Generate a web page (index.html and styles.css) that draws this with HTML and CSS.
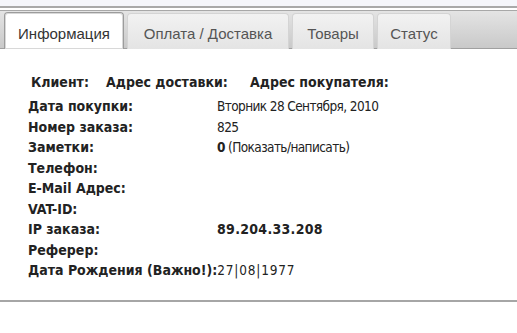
FILE: index.html
```html
<!DOCTYPE html>
<html lang="ru">
<head>
    <meta charset="UTF-8">
    <title>Заказ</title>
    <link rel="stylesheet" href="styles.css">
</head>
<body>
    <div class="topstrip"></div>
    <div class="tabbar">
        <div class="tab active">Информация</div>
        <div class="tab tab-pay">Оплата / Доставка</div>
        <div class="tab tab-goods">Товары</div>
        <div class="tab tab-status">Статус</div>
    </div>

    <div class="panel">
        <div class="heads">
            <span class="head-client">Клиент:</span>
            <span class="head-ship">Адрес доставки:</span>
            <span>Адрес покупателя:</span>
        </div>

        <div class="info">
            <div class="label">Дата покупки:</div>
            <div class="value">Вторник 28 Сентября, 2010</div>
            <div class="label">Номер заказа:</div>
            <div class="value">825</div>
            <div class="label">Заметки:</div>
            <div class="value"><b>0</b> (Показать/написать)</div>
            <div class="label">Телефон:</div>
            <div class="value"></div>
            <div class="label">E-Mail Адрес:</div>
            <div class="value"></div>
            <div class="label">VAT-ID:</div>
            <div class="value"></div>
            <div class="label">IP заказа:</div>
            <div class="value ip">89.204.33.208</div>
            <div class="label">Реферер:</div>
            <div class="value"></div>
            <div class="label birth">Дата Рождения (Важно!):<span class="value bday">27|08|1977</span></div>
        </div>
    </div>
    <div class="bottomline"></div>
</body>
</html>
```

FILE: styles.css
```css
* {
    box-sizing: border-box;
    margin: 0;
    padding: 0;
}

body {
    font-family: 'DejaVu Sans Condensed', 'DejaVu Sans', sans-serif;
    font-size: 14px;
    color: #222;
    background: #fff;
}

.topstrip {
    height: 8px;
    background: #f5f6fb;
    border-bottom: 2px solid #a9a9a9;
}

.tabbar {
    margin-top: 2px;
    height: 39px;
    border-top: 1px solid #a8a8a8;
    border-bottom: 1px solid #a0a0a0;
    background: linear-gradient(#e4e4e4, #c9c9c9);
    display: flex;
    align-items: flex-end;
    padding-left: 4px;
}

.tab {
    font-family: 'Liberation Sans', Arial, sans-serif;
    font-size: 15px;
    color: #555;
    height: 36px;
    padding-top: 11px;
    line-height: 18px;
    text-align: center;
    background: linear-gradient(#f2f2f2, #e4e4e4);
    border: 1px solid #d4d4d4;
    border-bottom: none;
    border-radius: 4px 4px 0 0;
    margin-right: 3px;
    margin-bottom: -1px;
}

.tab.active {
    width: 120px;
    background: #fff;
    color: #333;
    border: 1px solid #9c9c9c;
    border-bottom: none;
    box-shadow: inset 0 0 0 1px #d8d8d8;
    height: 37px;
    padding-top: 12px;
}

.tab-pay {
    width: 162px;
}

.tab-goods {
    width: 82px;
}

.tab-status {
    width: 74px;
}

.panel {
    padding: 25px 0 0 28px;
    height: 251px;
}

.heads {
    font-weight: bold;
    padding-left: 3px;
    height: 21px;
    display: flex;
}

.head-client {
    width: 75px;
}

.head-ship {
    width: 144px;
}

.info {
    margin-top: 3px;
    display: grid;
    grid-template-columns: 189px auto;
    grid-auto-rows: 20.5px;
}

.label {
    font-weight: bold;
}

.value {
    font-weight: normal;
    font-size: 13.5px;
    letter-spacing: -0.6px;
    color: #222;
}

.ip {
    font-weight: bold;
    font-size: 14px;
    letter-spacing: 0.3px;
}

.bday {
    letter-spacing: 0.8px;
}

.birth {
    grid-column: 1 / 3;
}

.bottomline {
    border-top: 2px solid #a6a6a6;
}
```
